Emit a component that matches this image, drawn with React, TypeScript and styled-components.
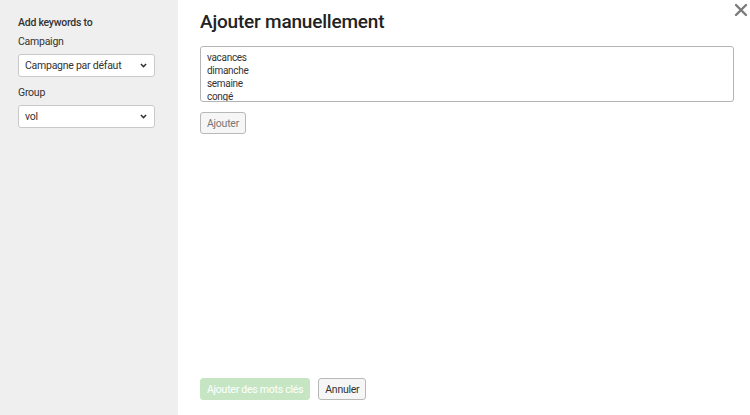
import React from 'react';
import styled, { createGlobalStyle } from 'styled-components';

const GlobalStyle = createGlobalStyle`
  html, body {
    margin: 0;
    padding: 0;
    height: 100%;
  }
  body {
    font-family: Roboto, 'Noto Sans', 'Liberation Sans', sans-serif;
    color: #333333;
    letter-spacing: -0.25px;
  }
  #root {
    height: 100%;
  }
`;

const Layout = styled.div`
  display: flex;
  width: 750px;
  height: 415px;
  background: #ffffff;
  overflow: hidden;
`;

const Sidebar = styled.aside`
  width: 178px;
  flex: 0 0 178px;
  box-sizing: border-box;
  background: #efefef;
  padding: 16px 23px 0 18px;
  display: flex;
  flex-direction: column;
`;

const SidebarTitle = styled.div`
  font-size: 10.5px;
  font-weight: 500;
  color: #333;
  line-height: 14px;
  margin-bottom: 5px;
`;

const FieldLabel = styled.label`
  font-size: 10.5px;
  color: #333;
  line-height: 14px;
  margin-bottom: 5px;
`;

const SelectBox = styled.div`
  height: 23px;
  box-sizing: border-box;
  border: 1px solid #c9c9c9;
  border-radius: 3px;
  background: #ffffff;
  display: flex;
  align-items: center;
  justify-content: space-between;
  padding: 0 7px 0 6px;
  font-size: 10.5px;
  color: #333;
  margin-bottom: 9px;
`;

const Chevron = () => (
  <svg width="7" height="5" viewBox="0 0 7 5">
    <path d="M0.9 1 L3.5 3.6 L6.1 1" fill="none" stroke="#333" strokeWidth="1.5" />
  </svg>
);

const Main = styled.main`
  flex: 1;
  position: relative;
  padding: 10px 16px 15px 22px;
  display: flex;
  flex-direction: column;
`;

const Title = styled.h1`
  margin: 0 0 12px;
  font-size: 19px;
  font-weight: 500;
  letter-spacing: -0.2px;
  color: #222;
  line-height: 24px;
`;

const CloseButton = styled.button`
  position: absolute;
  top: 3px;
  right: 2px;
  width: 14px;
  height: 14px;
  padding: 0;
  border: 0;
  background: none;
  cursor: pointer;
`;

const KeywordsArea = styled.textarea`
  box-sizing: border-box;
  width: 534px;
  height: 56px;
  border: 1px solid #b5b5b5;
  border-radius: 3px;
  padding: 4px 6px;
  resize: none;
  font-family: inherit;
  font-size: 10px;
  letter-spacing: -0.3px;
  line-height: 13px;
  color: #333;
  overflow: hidden;
  margin: 0 0 10px;
`;

const Button = styled.button<{ variant?: 'primary' | 'default' }>`
  height: 22px;
  box-sizing: border-box;
  padding: 0 6px;
  border-radius: 3px;
  font-family: inherit;
  font-size: 10.5px;
  letter-spacing: -0.25px;
  border: 1px solid ${p => (p.variant === 'primary' ? '#c6e6c3' : '#b8b8b8')};
  background: ${p => (p.variant === 'primary' ? '#c6e6c3' : '#f6f6f6')};
  color: ${p => (p.variant === 'primary' ? '#ffffff' : '#333')};
`;

const AddButton = styled(Button)`
  align-self: flex-start;
  color: #777;
`;

const Footer = styled.div`
  margin-top: auto;
  display: flex;
  gap: 8px;
`;

export default function App() {
  return (
    <>
      <GlobalStyle />
      <Layout>
        <Sidebar>
          <SidebarTitle>Add keywords to</SidebarTitle>
          <FieldLabel>Campaign</FieldLabel>
          <SelectBox>
            <span>Campagne par défaut</span>
            <Chevron />
          </SelectBox>
          <FieldLabel>Group</FieldLabel>
          <SelectBox>
            <span>vol</span>
            <Chevron />
          </SelectBox>
        </Sidebar>
        <Main>
          <CloseButton aria-label="Fermer">
            <svg width="14" height="14" viewBox="0 0 14 14">
              <path d="M2 2 L12 12 M12 2 L2 12" stroke="#7a7a7a" strokeWidth="2.4" strokeLinecap="round" />
            </svg>
          </CloseButton>
          <Title>Ajouter manuellement</Title>
          <KeywordsArea defaultValue={'vacances\ndimanche\nsemaine\ncongé'} />
          <AddButton>Ajouter</AddButton>
          <Footer>
            <Button variant="primary" disabled>Ajouter des mots clés</Button>
            <Button>Annuler</Button>
          </Footer>
        </Main>
      </Layout>
    </>
  );
}
